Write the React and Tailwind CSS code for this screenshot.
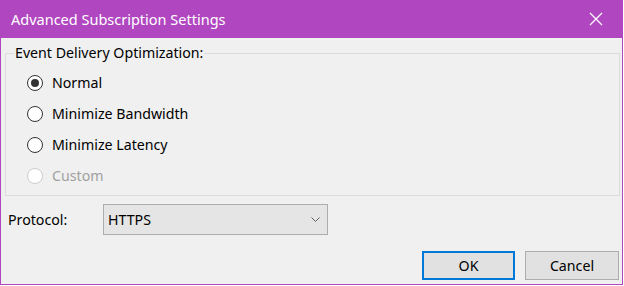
import React from "react"

const font = { fontFamily: '"Noto Sans", "Open Sans", sans-serif' }

function Radio({ label, checked, disabled }) {
    return (
        <label className="flex h-[31px] items-center pl-[21px]">
            <span className={"flex h-[16px] w-[16px] items-center justify-center rounded-full border bg-white " + (disabled ? "border-[#cccccc]" : "border-[#333333]")}>
                {checked && <span className="h-[8px] w-[8px] rounded-full bg-[#333333]" />}
            </span>
            <span className={"ml-[9px] text-[14.2px] leading-[20px] " + (disabled ? "text-[#a0a0a0]" : "text-black")}>{label}</span>
        </label>
    )
}

export default function App() {
    return (
        <div className="flex h-[285px] w-[623px] flex-col bg-[#b146c1] px-px pb-px" style={font}>
            {/* title bar */}
            <div className="flex h-[38px] items-center justify-between pl-[10px] pr-[13px] text-white">
                <span className="text-[14.5px] leading-[20px]">Advanced Subscription Settings</span>
                <svg width="14" height="14" viewBox="0 0 14 14" className="mr-[6px]">
                    <path d="M1 1 L13 13 M13 1 L1 13" stroke="white" strokeWidth="1.2" fill="none" />
                </svg>
            </div>

            <div className="flex flex-1 flex-col bg-[#f0f0f0]">
                <fieldset className="ml-[4px] mr-[2px] mt-[5px] border border-[#dcdcdc] pb-[4px]">
                    <legend className="ml-[8px] px-[1px] text-[14.2px] leading-[20px] text-black">Event Delivery Optimization:</legend>
                    <div className="pt-[4px]">
                        <Radio label="Normal" checked />
                        <Radio label="Minimize Bandwidth" />
                        <Radio label="Minimize Latency" />
                        <Radio label="Custom" disabled />
                    </div>
                </fieldset>

                <div className="mt-[8px] flex items-center pl-[7px]">
                    <span className="w-[95px] text-[14.2px] leading-[20px] text-black">Protocol:</span>
                    <div className="flex h-[31px] w-[225px] items-center justify-between border border-[#adadad] bg-[#e5e5e5] pl-[4px] pr-[7px]">
                        <span className="text-[14.2px] leading-[20px] text-black">HTTPS</span>
                        <svg width="9" height="5" viewBox="0 0 9 5">
                            <path d="M0.5 0.5 L4.5 4.5 L8.5 0.5" stroke="#606060" strokeWidth="1" fill="none" />
                        </svg>
                    </div>
                </div>

                <div className="mt-[16px] flex justify-end gap-[10px] pr-[3px]">
                    <button className="h-[29px] w-[93px] border-2 border-[#0078d7] bg-[#e1e1e1] text-[14.2px] text-black">OK</button>
                    <button className="h-[29px] w-[94px] border border-[#adadad] bg-[#e1e1e1] text-[14.2px] text-black">Cancel</button>
                </div>
            </div>
        </div>
    )
}
